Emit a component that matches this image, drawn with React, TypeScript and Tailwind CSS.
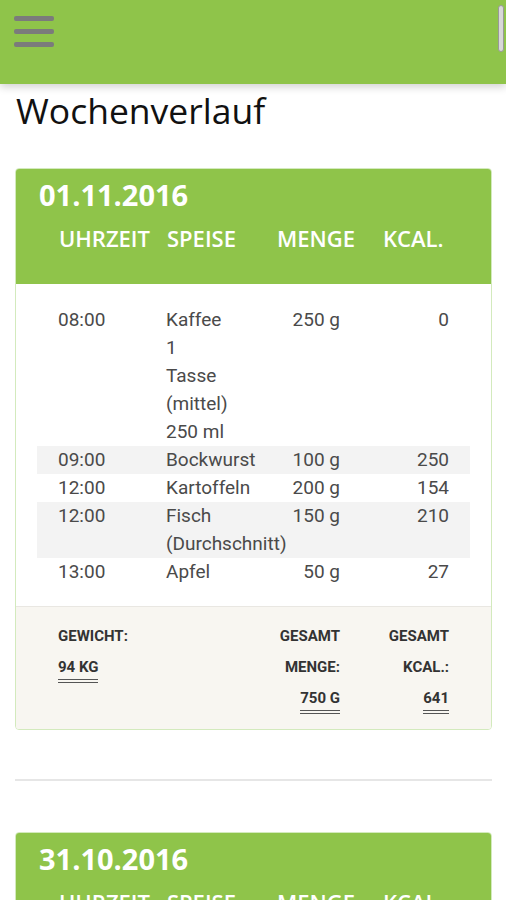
import React from 'react';

type Entry = { time: string; food: string[]; amount: string; kcal: string };

const day1: Entry[] = [
  { time: '08:00', food: ['Kaffee', '1', 'Tasse', '(mittel)', '250 ml'], amount: '250 g', kcal: '0' },
  { time: '09:00', food: ['Bockwurst'], amount: '100 g', kcal: '250' },
  { time: '12:00', food: ['Kartoffeln'], amount: '200 g', kcal: '154' },
  { time: '12:00', food: ['Fisch', '(Durchschnitt)'], amount: '150 g', kcal: '210' },
  { time: '13:00', food: ['Apfel'], amount: '50 g', kcal: '27' },
];

const cols = 'grid grid-cols-[108px_110px_106px_109px]';
const heading = { fontFamily: '"Open Sans", "DejaVu Sans", sans-serif' };
const body = { fontFamily: 'Roboto, "Liberation Sans", sans-serif' };

function CardHeader({ date }: { date: string }) {
  return (
    <div className="bg-[#8fc44a] pt-[6px] pb-[31px] text-white" style={heading}>
      <div className="pl-[23px] text-[29px] font-bold leading-[40px]">{date}</div>
      <div className={`${cols} px-[22px] mt-[8px] text-[22px] font-semibold leading-[30px]`}>
        <div className="pl-[21px]">UHRZEIT</div>
        <div className="pl-[21px]">SPEISE</div>
        <div className="pl-[21px]">MENGE</div>
        <div className="pl-[21px]">KCAL.</div>
      </div>
    </div>
  );
}

function DayCard({ date, entries, weight, total, kcal }: { date: string; entries: Entry[]; weight: string; total: string; kcal: string }) {
  return (
    <div className="rounded-[4px] border border-[#d3eabd] overflow-hidden">
      <CardHeader date={date} />
      <div className="bg-white px-[21px] pt-[22px] pb-[20px] text-[19px] leading-[28px] text-[#4a4a4a]" style={body}>
        {entries.map((e, i) => (
          <div key={i} className={`${cols} ${i % 2 === 1 ? 'bg-[#f3f3f3]' : ''}`}>
            <div className="pl-[21px]">{e.time}</div>
            <div className="pl-[21px] whitespace-nowrap">
              {e.food.map((f, j) => (
                <div key={j}>{f}</div>
              ))}
            </div>
            <div className="pr-[21px] text-right">{e.amount}</div>
            <div className="pr-[21px] text-right">{e.kcal}</div>
          </div>
        ))}
      </div>
      <div className="bg-[#f8f6f1] border-t border-[#e9e7e2] px-[21px] pt-[14px] pb-[15px] text-[15px] font-bold leading-[31px] text-[#333]" style={body}>
        <div className={cols}>
          <div className="pl-[21px]">
            <div>GEWICHT:</div>
            <span className="inline-block leading-[24px] border-b-[4px] border-double border-[#555]">{weight}</span>
          </div>
          <div />
          <div className="pr-[21px] text-right">
            <div>GESAMT</div>
            <div>MENGE:</div>
            <span className="inline-block leading-[24px] border-b-[4px] border-double border-[#555]">{total}</span>
          </div>
          <div className="pr-[21px] text-right">
            <div>GESAMT</div>
            <div>KCAL.:</div>
            <span className="inline-block leading-[24px] border-b-[4px] border-double border-[#555]">{kcal}</span>
          </div>
        </div>
      </div>
    </div>
  );
}

export default function App() {
  return (
    <div className="relative w-[506px] h-[900px] overflow-hidden bg-white">
      {/* top bar */}
      <div className="relative z-10 h-[84px] bg-[#8fc44a] shadow-[0_3px_8px_rgba(0,0,0,0.18)] pl-[14px] pt-[16px]">
        <div className="flex flex-col gap-[8px] w-[40px]">
          <div className="h-[5px] rounded-[2px] bg-[#7b7b7b]" />
          <div className="h-[5px] rounded-[2px] bg-[#7b7b7b]" />
          <div className="h-[5px] rounded-[2px] bg-[#7b7b7b]" />
        </div>
      </div>
      <div className="absolute z-20 right-[2px] top-[5px] w-[6px] h-[47px] rounded-[3px] border border-[#999] bg-[#d8d8d8]" />

      <div className="pl-[15px] pr-[14px]">
        <h1 className="pl-[1px] pt-[2px] text-[35.5px] leading-[48px] text-[#111]" style={heading}>
          Wochenverlauf
        </h1>
        <div className="mt-[34px]">
          <DayCard date="01.11.2016" entries={day1} weight="94 KG" total="750 G" kcal="641" />
        </div>
        <div className="mt-[49px] h-[2px] bg-[#e6e6e6]" />
        <div className="mt-[51px]">
          <DayCard date="31.10.2016" entries={day1} weight="94 KG" total="750 G" kcal="641" />
        </div>
      </div>
    </div>
  );
}
